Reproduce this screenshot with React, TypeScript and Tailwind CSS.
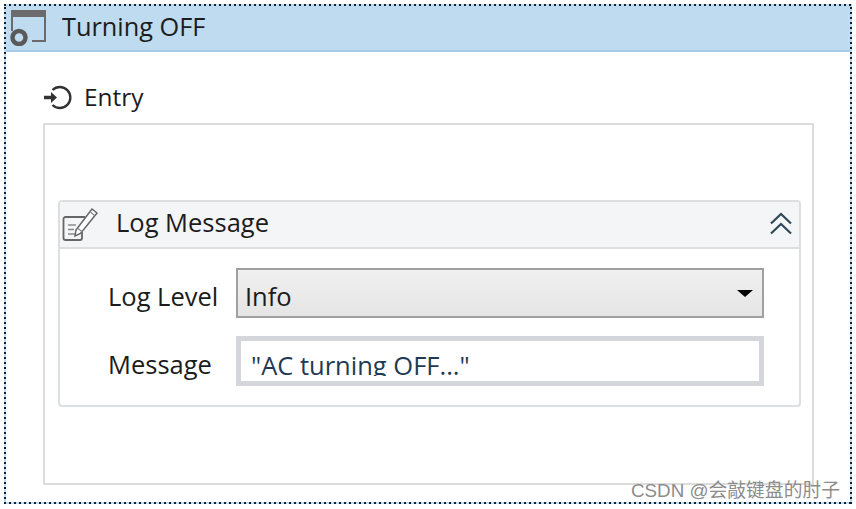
const font = { fontFamily: '"Open Sans", "Noto Sans CJK SC", sans-serif' };

function StateIcon() {
  return (
    <svg width="38" height="36" viewBox="0 0 38 36" fill="none">
      <rect x="1" y="0" width="35" height="7" fill="#6b6b6b" />
      <path d="M2 6V21M35 6V31H22" stroke="#6b6b6b" strokeWidth="2" />
      <circle cx="9" cy="27.5" r="6.5" stroke="#5a5a5a" strokeWidth="4.5" fill="#bfdbef" />
    </svg>
  );
}

function EntryIcon() {
  return (
    <svg width="30" height="27" viewBox="0 0 30 27" fill="none">
      <path d="M9.5 6A10.5 10.5 0 1 1 9.5 21" stroke="#333" strokeWidth="2.4" />
      <path d="M1 13.5H10" stroke="#333" strokeWidth="3.5" />
      <path d="M8 8L14 13.5L8 19Z" fill="#333" />
    </svg>
  );
}

function LogIcon() {
  return (
    <svg width="38" height="36" viewBox="0 0 38 36" fill="none">
      <path d="M24 12H4.5a2 2 0 0 0-2 2V33a2 2 0 0 0 2 2H19a2 2 0 0 0 2-2V24" stroke="#666" strokeWidth="1.8" />
      <path d="M7 20H15M7 24.5H13M7 29H14" stroke="#8a8a8a" strokeWidth="1.5" />
      <path d="M15 25L31 4L36 8L19.5 28.5L14 31Z" stroke="#666" strokeWidth="1.5" fill="#fff" />
      <path d="M17 23.5L21.5 27M29 6.5L33.5 10.5" stroke="#888" strokeWidth="1.2" />
    </svg>
  );
}

function CollapseIcon() {
  return (
    <svg width="22" height="23" viewBox="0 0 22 23" fill="none" stroke="#2f4858" strokeWidth="2.2">
      <path d="M1 11.5L11 2L21 11.5" />
      <path d="M1 21.5L11 12L21 21.5" />
    </svg>
  );
}

export default function App() {
  return (
    <div className="relative w-[856px] h-[509px] bg-white pt-1 pl-1 text-[#1c1c1c]" style={font}>
      <div className="w-[848px] h-[500px] p-[2px] [background:repeating-linear-gradient(90deg,#10202e_0_2px,transparent_2px_5px)_top/100%_2px_no-repeat,repeating-linear-gradient(90deg,#10202e_0_2px,transparent_2px_5px)_bottom/100%_2px_no-repeat,repeating-linear-gradient(0deg,#10202e_0_2px,transparent_2px_5px)_left/2px_100%_no-repeat,repeating-linear-gradient(0deg,#10202e_0_2px,transparent_2px_5px)_right/2px_100%_no-repeat,#bfdbef]">
        <div className="h-full bg-white flex flex-col">
          {/* state header */}
          <div className="h-[46px] shrink-0 flex items-center bg-[#bfdbef] border-b-2 border-[#a6cce9] pl-[4px]">
            <StateIcon />
            <span className="ml-[14px] -mt-[3px] text-[25.3px] leading-none">Turning OFF</span>
          </div>

          <div className="flex-1 pl-[37px] pr-[36px] pb-[17px] flex flex-col">
            <div className="flex items-center h-[30px] mt-[30px] mb-[11px]">
              <EntryIcon />
              <span className="ml-[11px] text-[24.4px] leading-none">Entry</span>
            </div>

            {/* entry body */}
            <div className="flex-1 border-2 border-[#dcdcdc] pt-[75px] pl-[13px] pr-[11px]">
              <div className="h-[207px] border-2 border-[#dcdfe2] rounded-[4px]">
                <div className="h-[47px] flex items-center bg-[#f3f5f6] border-b-2 border-[#dcdfe2] pl-[1px] pr-[7px]">
                  <div className="-mt-[3px]">
                    <LogIcon />
                  </div>
                  <span className="ml-[17px] -mt-[3px] text-[25.5px] leading-none">Log Message</span>
                  <div className="ml-auto -mt-[3px]">
                    <CollapseIcon />
                  </div>
                </div>

                <div className="pl-[48px] pr-[35px] pt-[19px] flex flex-col gap-[18px]">
                  <div className="flex items-center">
                    <span className="w-[128px] mt-[8px] text-[25.5px] leading-none">Log Level</span>
                    <div className="flex-1 h-[50px] flex items-center justify-between border-2 border-[#a0a0a0] bg-gradient-to-b from-[#f0f0f0] to-[#e5e5e5] pl-[7px] pr-[9px]">
                      <span className="mt-[8px] text-[25.5px] leading-none">Info</span>
                      <span className="w-0 h-0 border-x-[8px] border-x-transparent border-t-[7px] border-t-black" />
                    </div>
                  </div>
                  <div className="flex items-center">
                    <span className="w-[128px] mt-[8px] text-[25.5px] leading-none">Message</span>
                    <div className="flex-1 h-[50px] border-[5px] border-[#d5d6db] pl-[10px] overflow-hidden">
                      <span className="block text-[25.5px] leading-[42px] mt-[3px] h-[32px] overflow-hidden text-[#1f3a52]">"AC turning OFF..."</span>
                    </div>
                  </div>
                </div>
              </div>
            </div>
          </div>
        </div>
      </div>

      {/* watermark */}
      <span className="absolute right-[16px] top-[479px] text-[18.8px] leading-[24px] text-[#8c8c8c]" style={{ fontFamily: '"Liberation Sans", "Noto Sans CJK SC", sans-serif' }}>
        CSDN @会敲键盘的肘子
      </span>
    </div>
  );
}
